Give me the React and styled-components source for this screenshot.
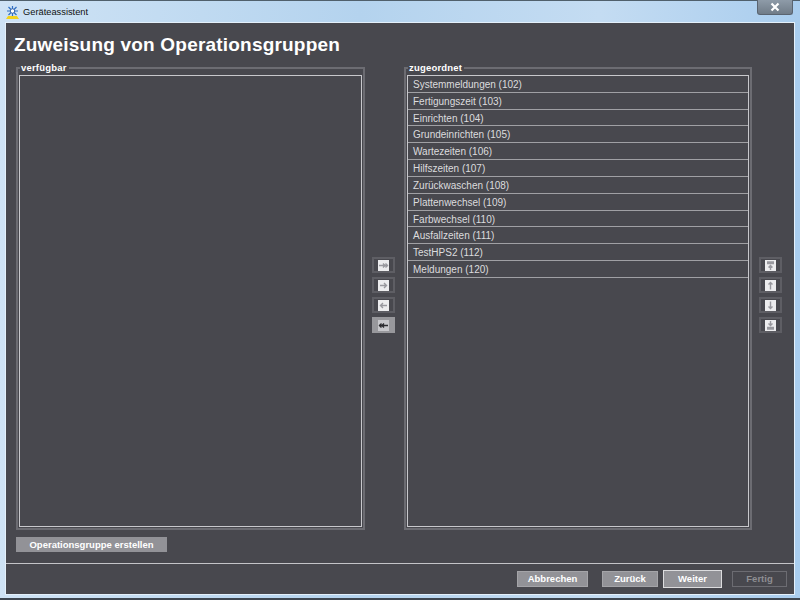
import styled, { createGlobalStyle } from "styled-components";

const GlobalStyle = createGlobalStyle`
html, body {
    margin: 0;
    padding: 0;
    width: 800px;
    height: 600px;
    overflow: hidden;
    background: #3a4048;
}
* { box-sizing: border-box; }
`;

const groups = [
    "Systemmeldungen (102)",
    "Fertigungszeit (103)",
    "Einrichten (104)",
    "Grundeinrichten (105)",
    "Wartezeiten (106)",
    "Hilfszeiten (107)",
    "Zurückwaschen (108)",
    "Plattenwechsel (109)",
    "Farbwechsel (110)",
    "Ausfallzeiten (111)",
    "TestHPS2 (112)",
    "Meldungen (120)",
];

const moveIcons = [
    <path key="all" d="M1 5.5h9M5 3.5l2 2-2 2M7.5 3.5l2 2-2 2" />,
    <path key="right" d="M2 5.5h6.5M6 3l2.5 2.5L6 8" />,
    <path key="left" d="M9 5.5H2.5M5 3 2.5 5.5 5 8" />,
    <path key="none" d="M1 5.5h9M6 3.5l-2 2 2 2M3.5 3.5l-2 2 2 2" />,
];

const orderIcons = [
    <path key="top" d="M2 2h7M2 3.5h7M5.5 10V5.5M3.5 7.5l2-2 2 2" />,
    <path key="up" d="M5.5 9.5V2.5M3.5 4.5l2-2 2 2" />,
    <path key="down" d="M5.5 1.5v7M3.5 6.5l2 2 2-2" />,
    <path key="bottom" d="M2 9h7M2 7.5h7M5.5 1v4.5M3.5 3.5l2 2 2-2" />,
];

const App = () => {
    return (
        <>
            <GlobalStyle />
            <Window>
                <TitleBar>
                    <AppIcon viewBox="0 0 13 13">
                        <g stroke="#2f6fc4" strokeWidth="1.2">
                            <path d="M6.5 0v10M1 5h11M2.5 1l8 8M10.5 1l-8 8" />
                        </g>
                        <circle cx="6.5" cy="5" r="2.2" fill="#fff" stroke="#1d4f9c" strokeWidth="0.8" />
                        <path d="M0 13 2 10h9l2 3z" fill="#f2d21e" />
                    </AppIcon>
                    <TitleText>Geräteassistent</TitleText>
                    <CloseButton>
                        <svg width="12" height="10" viewBox="0 0 12 10">
                            <path d="M2.5 1.5 9.5 8.5M9.5 1.5 2.5 8.5" stroke="#fff" strokeWidth="2.2" />
                        </svg>
                    </CloseButton>
                </TitleBar>
                <Client>
                    <Content>
                        <Heading>Zuweisung von Operationsgruppen</Heading>
                        <Columns>
                            <Group>
                                <GroupLabel>verfügbar</GroupLabel>
                                <ListBox />
                            </Group>
                            <ToolColumn>
                                {moveIcons.map((icon, index) => (
                                    <ToolButton key={index} $active={index === 3}>
                                        <ToolIcon viewBox="0 0 11 11" $active={index === 3}>{icon}</ToolIcon>
                                    </ToolButton>
                                ))}
                            </ToolColumn>
                            <Group>
                                <GroupLabel>zugeordnet</GroupLabel>
                                <ListBox>
                                    {groups.map((item) => (
                                        <ListRow key={item}>{item}</ListRow>
                                    ))}
                                </ListBox>
                            </Group>
                            <ToolColumn>
                                {orderIcons.map((icon, index) => (
                                    <ToolButton key={index}>
                                        <ToolIcon viewBox="0 0 11 11">{icon}</ToolIcon>
                                    </ToolButton>
                                ))}
                            </ToolColumn>
                        </Columns>
                        <CreateButton>Operationsgruppe erstellen</CreateButton>
                    </Content>
                    <Footer>
                        <NavButton $width={71}>Abbrechen</NavButton>
                        <NavButton $width={56} $gap={14}>Zurück</NavButton>
                        <NavButton $width={59} $gap={5} $focused>Weiter</NavButton>
                        <NavButton $width={55} $gap={10} $disabled>Fertig</NavButton>
                    </Footer>
                </Client>
            </Window>
        </>
    );
};

const Window = styled.div`
width: 800px;
height: 600px;
display: flex;
flex-direction: column;
padding: 0 6px 6px;
font-family: "Liberation Sans", Arial, sans-serif;
background: linear-gradient(90deg, #cfe3f5 0%, #b4d3ee 45%, #c4dcf2 75%, #a9cdee 100%);
box-shadow: inset 0 1px 0 #50606c, inset 0 -2px 0 #3e4650;
`;

const TitleBar = styled.div`
height: 23px;
flex: none;
display: flex;
align-items: center;
position: relative;
`;

const AppIcon = styled.svg`
width: 13px;
height: 13px;
margin-top: 1px;
`;

const TitleText = styled.span`
margin-left: 4px;
font-size: 9.3px;
color: #111;
`;

const CloseButton = styled.div`
position: absolute;
top: 0;
right: 1px;
width: 36px;
height: 15px;
display: flex;
align-items: center;
justify-content: center;
background: linear-gradient(#8e9ba8, #707c88);
border: 1px solid #5a6470;
border-top: none;
border-radius: 0 0 3px 3px;
`;

const Client = styled.div`
flex: 1;
display: flex;
flex-direction: column;
background: #48484e;
box-shadow: 0 0 0 1px #e4f0fa;
`;

const Content = styled.div`
flex: 1;
display: flex;
flex-direction: column;
padding: 0 10px;
`;

const Heading = styled.h1`
margin: 12px 0 0 -2px;
height: 20px;
font-size: 19px;
line-height: 20px;
font-weight: bold;
letter-spacing: 0.2px;
color: #fff;
`;

const Columns = styled.div`
margin-top: 7px;
height: 468px;
display: grid;
grid-template-columns: 349px 39px 348px 30px;
`;

const Group = styled.fieldset`
margin: 0;
padding: 0 1px 1px;
min-width: 0;
display: flex;
flex-direction: column;
border: 2px solid #6c6c72;
`;

const GroupLabel = styled.legend`
margin-left: 1px;
padding: 0 2px 0 1px;
height: 12px;
font-size: 9.5px;
line-height: 12px;
font-weight: bold;
letter-spacing: 0.2px;
color: #fff;
`;

const ListBox = styled.div`
flex: 1;
margin-top: 1px;
border: 1px solid #c8c8cc;
background: #48484e;
`;

const ListRow = styled.div`
height: 16.82px;
padding-left: 5px;
font-size: 10px;
line-height: 17px;
color: #dcdcde;
border-bottom: 1px solid #a0a0a4;
`;

const ToolColumn = styled.div`
display: flex;
flex-direction: column;
align-items: flex-start;
justify-content: center;
gap: 4px;
padding: 0 0 2px 7px;
`;

const ToolButton = styled.div`
width: 23px;
height: 16px;
display: flex;
align-items: center;
justify-content: center;
border: 2px solid ${(props) => (props.$active ? "#98989c" : "#5e5e64")};
background: ${(props) => (props.$active ? "#98989c" : "transparent")};
`;

const ToolIcon = styled.svg`
width: 11px;
height: 11px;
background: ${(props) => (props.$active ? "#c8c8cc" : "#ececee")};
fill: none;
stroke: ${(props) => (props.$active ? "#2c2c30" : "#98989e")};
stroke-width: 1.4;
`;

const CreateButton = styled.div`
margin-top: 7px;
width: 151px;
height: 15px;
font-size: 9.5px;
line-height: 15px;
font-weight: bold;
text-align: center;
color: #fff;
background: #929297;
`;

const Footer = styled.div`
height: 31px;
flex: none;
display: flex;
justify-content: flex-end;
align-items: center;
padding-right: 7px;
border-top: 1px solid #c4c4c8;
`;

const NavButton = styled.div`
width: ${(props) => props.$width}px;
height: ${(props) => (props.$focused ? 18 : 16)}px;
margin-left: ${(props) => props.$gap || 0}px;
font-size: 9.5px;
line-height: ${(props) => (props.$focused ? 15 : 14)}px;
font-weight: bold;
text-align: center;
color: ${(props) => (props.$disabled ? "#8e8e92" : "#fff")};
background: ${(props) => (props.$disabled ? "transparent" : "#929297")};
border: 1px solid ${(props) => (props.$focused ? "#dcdcde" : props.$disabled ? "#6c6c72" : "#a4a4a8")};
`;

export default App;
